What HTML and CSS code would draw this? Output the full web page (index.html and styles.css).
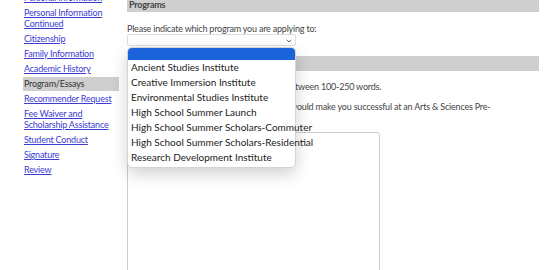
FILE: index.html
```html
<!DOCTYPE html>
<html lang="en">
<head>
  <meta charset="UTF-8" />
  <meta name="viewport" content="width=device-width, initial-scale=1.0"/>
  <title>Application - Program/Essays</title>
  <link rel="stylesheet" href="styles.css">
</head>
<body>

  <div class="page">
    <nav class="sidebar">
      <a href="#">Personal Information</a>
      <a href="#">Personal Information Continued</a>
      <a href="#">Citizenship</a>
      <a href="#">Family Information</a>
      <a href="#">Academic History</a>
      <span class="current">Program/Essays</span>
      <a href="#">Recommender Request</a>
      <a href="#">Fee Waiver and Scholarship Assistance</a>
      <a href="#">Student Conduct</a>
      <a href="#">Signature</a>
      <a href="#">Review</a>
    </nav>

    <main class="content">
      <h2 class="section-title">Programs</h2>
      <p class="field-label">Please indicate which program you are applying to:</p>

      <div class="program-field">
        <div class="select">
          <svg class="chevron" width="6" height="4" viewBox="0 0 6 4">
            <path d="M0.8 0.8 L3 3 L5.2 0.8" fill="none" stroke="#666" stroke-width="1"/>
          </svg>
        </div>

        <ul class="options">
          <li class="selected"></li>
          <li>Ancient Studies Institute</li>
          <li>Creative Immersion Institute</li>
          <li>Environmental Studies Institute</li>
          <li>High School Summer Launch</li>
          <li>High School Summer Scholars-Commuter</li>
          <li>High School Summer Scholars-Residential</li>
          <li>Research Development Institute</li>
        </ul>
      </div>

      <h2 class="section-title">Essay</h2>
      <p class="note">Please respond to the following prompt in between 100-250 words.</p>
      <p class="prompt">Describe the qualities and experiences that would make you successful at an Arts &amp; Sciences Pre-College program.</p>

      <textarea class="essay"></textarea>
    </main>
  </div>

</body>
</html>
```

FILE: styles.css
```css
body {
  margin: 0;
  font-family: 'Lato', sans-serif;
  font-size: 9px;
  letter-spacing: -0.2px;
  color: #444;
  background-color: white;
  overflow: hidden;
}

.page {
  display: grid;
  grid-template-columns: 127px 412px;
  margin-top: -3px;
}

.sidebar {
  display: flex;
  flex-direction: column;
  align-items: flex-start;
  gap: 4px;
  padding-left: 24px;
  margin-top: -5px;
  line-height: 11px;
}

.sidebar a {
  color: #3c3cd2;
  width: 90px;
}

.sidebar .current {
  background-color: #cfcfcf;
  color: #333;
  width: 95px;
  margin-left: -1px;
  padding: 1px 0 2px 1px;
  margin-top: -1px;
  margin-bottom: -2px;
}

.content {
  position: relative;
}

.section-title {
  margin: 0;
  background-color: #cfcfcf;
  font-size: 9px;
  font-weight: bold;
  line-height: 15px;
  padding-left: 2px;
  color: #444;
}

.field-label {
  margin: 11px 0 0;
  line-height: 11px;
}

.program-field {
  position: relative;
  margin-bottom: 10px;
}

.select {
  position: relative;
  width: 167px;
  height: 10px;
  border: 1px solid #ddd;
  border-radius: 2px;
  background-color: white;
}

.chevron {
  position: absolute;
  right: 3px;
  top: 4px;
}

.options {
  position: absolute;
  top: 13px;
  left: 0;
  z-index: 2;
  width: 167px;
  margin: 0;
  padding: 0 0 2px;
  list-style: none;
  background-color: white;
  border: 1px solid #d4d4d4;
  border-radius: 5px;
  box-shadow: 0 6px 16px rgba(0, 0, 0, 0.18);
  color: #222;
  font-size: 10px;
  letter-spacing: 0;
}

.options li {
  line-height: 15px;
  padding-left: 3px;
  white-space: nowrap;
}

.options .selected {
  height: 12px;
  background-color: #1b63d8;
  border-radius: 4px 4px 0 0;
}

.note {
  margin: 10px 0 0;
  line-height: 11px;
}

.prompt {
  margin: 9px 0 0;
  line-height: 11px;
  max-width: 375px;
}

.essay {
  display: block;
  margin-top: 9px;
  width: 253px;
  height: 160px;
  box-sizing: border-box;
  border: 1px solid #ccc;
  border-radius: 3px;
  resize: none;
}
```
